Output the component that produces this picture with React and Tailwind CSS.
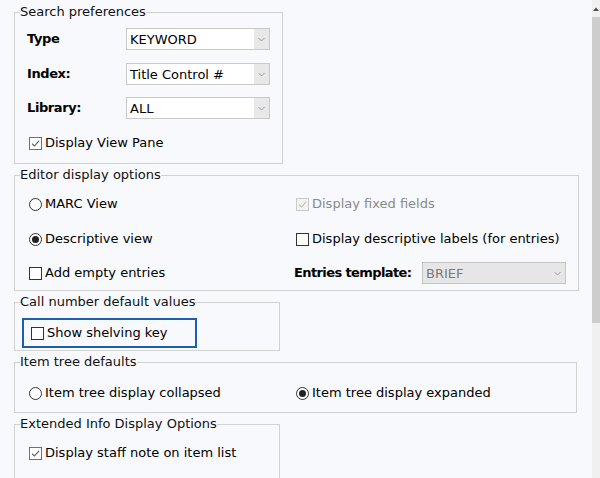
import React from 'react';

const Check = ({ checked, disabled }) => (
  <span
    className={`mx-[2px] inline-flex h-[13px] w-[13px] shrink-0 items-center justify-center border ${
      disabled ? 'border-[#c9c9c9] bg-[#f3f3f3]' : checked ? 'border-[#6f6f6f] bg-white' : 'border-[#333333] bg-white'
    }`}
  >
    {checked && (
      <svg width="9" height="9" viewBox="0 0 9 9">
        <path d="M1 4.6 L3.4 7 L8 1.8" fill="none" stroke={disabled ? '#bdbdbd' : '#555555'} strokeWidth="1.1" />
      </svg>
    )}
  </span>
);

const Radio = ({ checked }) => (
  <span className="mx-[2px] inline-flex h-[13px] w-[13px] shrink-0 items-center justify-center rounded-full border border-[#333333] bg-white">
    {checked && <span className="h-[7px] w-[7px] rounded-full bg-[#222222]" />}
  </span>
);

const Select = ({ value, disabled }) => (
  <div
    className={`flex h-[22px] w-[144px] items-stretch border ${
      disabled ? 'border-[#c4c4c4] bg-[#e6e6e6] text-[#7a7a7a]' : 'border-[#c9c9c9] bg-white text-black'
    }`}
  >
    <span className="flex-1 truncate pl-[3px] leading-[20px] pt-[1px]">{value}</span>
    <span className={`flex w-[15px] items-center justify-center ${disabled ? 'bg-[#e6e6e6]' : 'bg-[#e8e8e8]'}`}>
      <svg width="7" height="5" viewBox="0 0 7 5">
        <path d="M0.5 1 L3.5 4 L6.5 1" fill="none" stroke="#9a9a9a" strokeWidth="1" />
      </svg>
    </span>
  </div>
);

const Group = ({ title, width, children }) => (
  <fieldset className={`${width} border border-[#d2d2d2]`}>
    <legend className="ml-[5px] leading-[16px] text-[#111]">{title}</legend>
    {children}
  </fieldset>
);

export default function App() {
  return (
    <div
      className="flex h-[478px] w-[600px] overflow-hidden bg-[#f7f9fc] text-[13px] text-black"
      style={{ fontFamily: '"DejaVu Sans", Verdana, sans-serif' }}
    >
      <div className="flex-1 pl-[14px] pt-[4px]">
        {/* Search preferences */}
        <Group title="Search preferences" width="w-[266px]">
          <div className="px-[12px] pt-[8px] pb-[12px]">
            <div className="flex h-[22px] items-center">
              <span className="w-[99px] font-bold tracking-[-0.4px]">Type</span>
              <Select value="KEYWORD" />
            </div>
            <div className="mt-[13px] flex h-[22px] items-center">
              <span className="w-[99px] font-bold tracking-[-0.4px]">Index:</span>
              <Select value="Title Control #" />
            </div>
            <div className="mt-[12px] flex h-[22px] items-center">
              <span className="w-[99px] font-bold tracking-[-0.4px]">Library:</span>
              <Select value="ALL" />
            </div>
            <div className="mt-[16px] flex h-[16px] items-center gap-[1px]">
              <Check checked />
              <span>Display View Pane</span>
            </div>
          </div>
        </Group>

        {/* Editor display options */}
        <div className="mt-[3px]">
          <Group title="Editor display options" width="w-[563px]">
            <div className="grid grid-cols-[267px_1fr] px-[12px] pt-[10px] pb-[6px]">
              <div className="flex h-[22px] items-center gap-[1px]">
                <Radio />
                <span>MARC View</span>
              </div>
              <div className="flex h-[22px] items-center gap-[1px] text-[#8a8a8a]">
                <Check checked disabled />
                <span>Display fixed fields</span>
              </div>
              <div className="mt-[13px] flex h-[22px] items-center gap-[1px]">
                <Radio checked />
                <span>Descriptive view</span>
              </div>
              <div className="mt-[13px] flex h-[22px] items-center gap-[1px]">
                <Check />
                <span>Display descriptive labels (for entries)</span>
              </div>
              <div className="mt-[12px] flex h-[22px] items-center gap-[1px]">
                <Check />
                <span>Add empty entries</span>
              </div>
              <div className="mt-[12px] flex h-[22px] items-center">
                <span className="w-[128px] font-bold tracking-[-0.6px]">Entries template:</span>
                <Select value="BRIEF" disabled />
              </div>
            </div>
          </Group>
        </div>

        {/* Call number default values */}
        <div className="mt-[3px]">
          <Group title="Call number default values" width="w-[266px]">
            <div className="px-[7px] pt-[8px] pb-[2px]">
              <div className="flex h-[30px] w-[175px] items-center gap-[1px] border-2 border-[#1c5fb0] pl-[5px]">
                <Check />
                <span>Show shelving key</span>
              </div>
            </div>
          </Group>
        </div>

        {/* Item tree defaults */}
        <div className="mt-[3px]">
          <Group title="Item tree defaults" width="w-[563px]">
            <div className="grid grid-cols-[267px_1fr] px-[12px] pt-[12px] pb-[8px]">
              <div className="flex h-[22px] items-center gap-[1px]">
                <Radio />
                <span>Item tree display collapsed</span>
              </div>
              <div className="flex h-[22px] items-center gap-[1px]">
                <Radio checked />
                <span>Item tree display expanded</span>
              </div>
            </div>
          </Group>
        </div>

        {/* Extended Info Display Options */}
        <div className="mt-[3px]">
          <Group title="Extended Info Display Options" width="w-[266px]">
            <div className="px-[12px] pt-[10px] pb-[40px]">
              <div className="flex h-[22px] items-center gap-[1px]">
                <Check checked />
                <span>Display staff note on item list</span>
              </div>
            </div>
          </Group>
        </div>
      </div>

      {/* scrollbar */}
      <div className="flex w-[8px] flex-col bg-[#f0f0f0]">
        <div className="flex h-[17px] items-center justify-center">
          <svg width="6" height="4" viewBox="0 0 6 4">
            <path d="M0 4 L3 0.5 L6 4 Z" fill="#505050" />
          </svg>
        </div>
        <div className="h-[306px] bg-[#cdcdcd]" />
      </div>
    </div>
  );
}
